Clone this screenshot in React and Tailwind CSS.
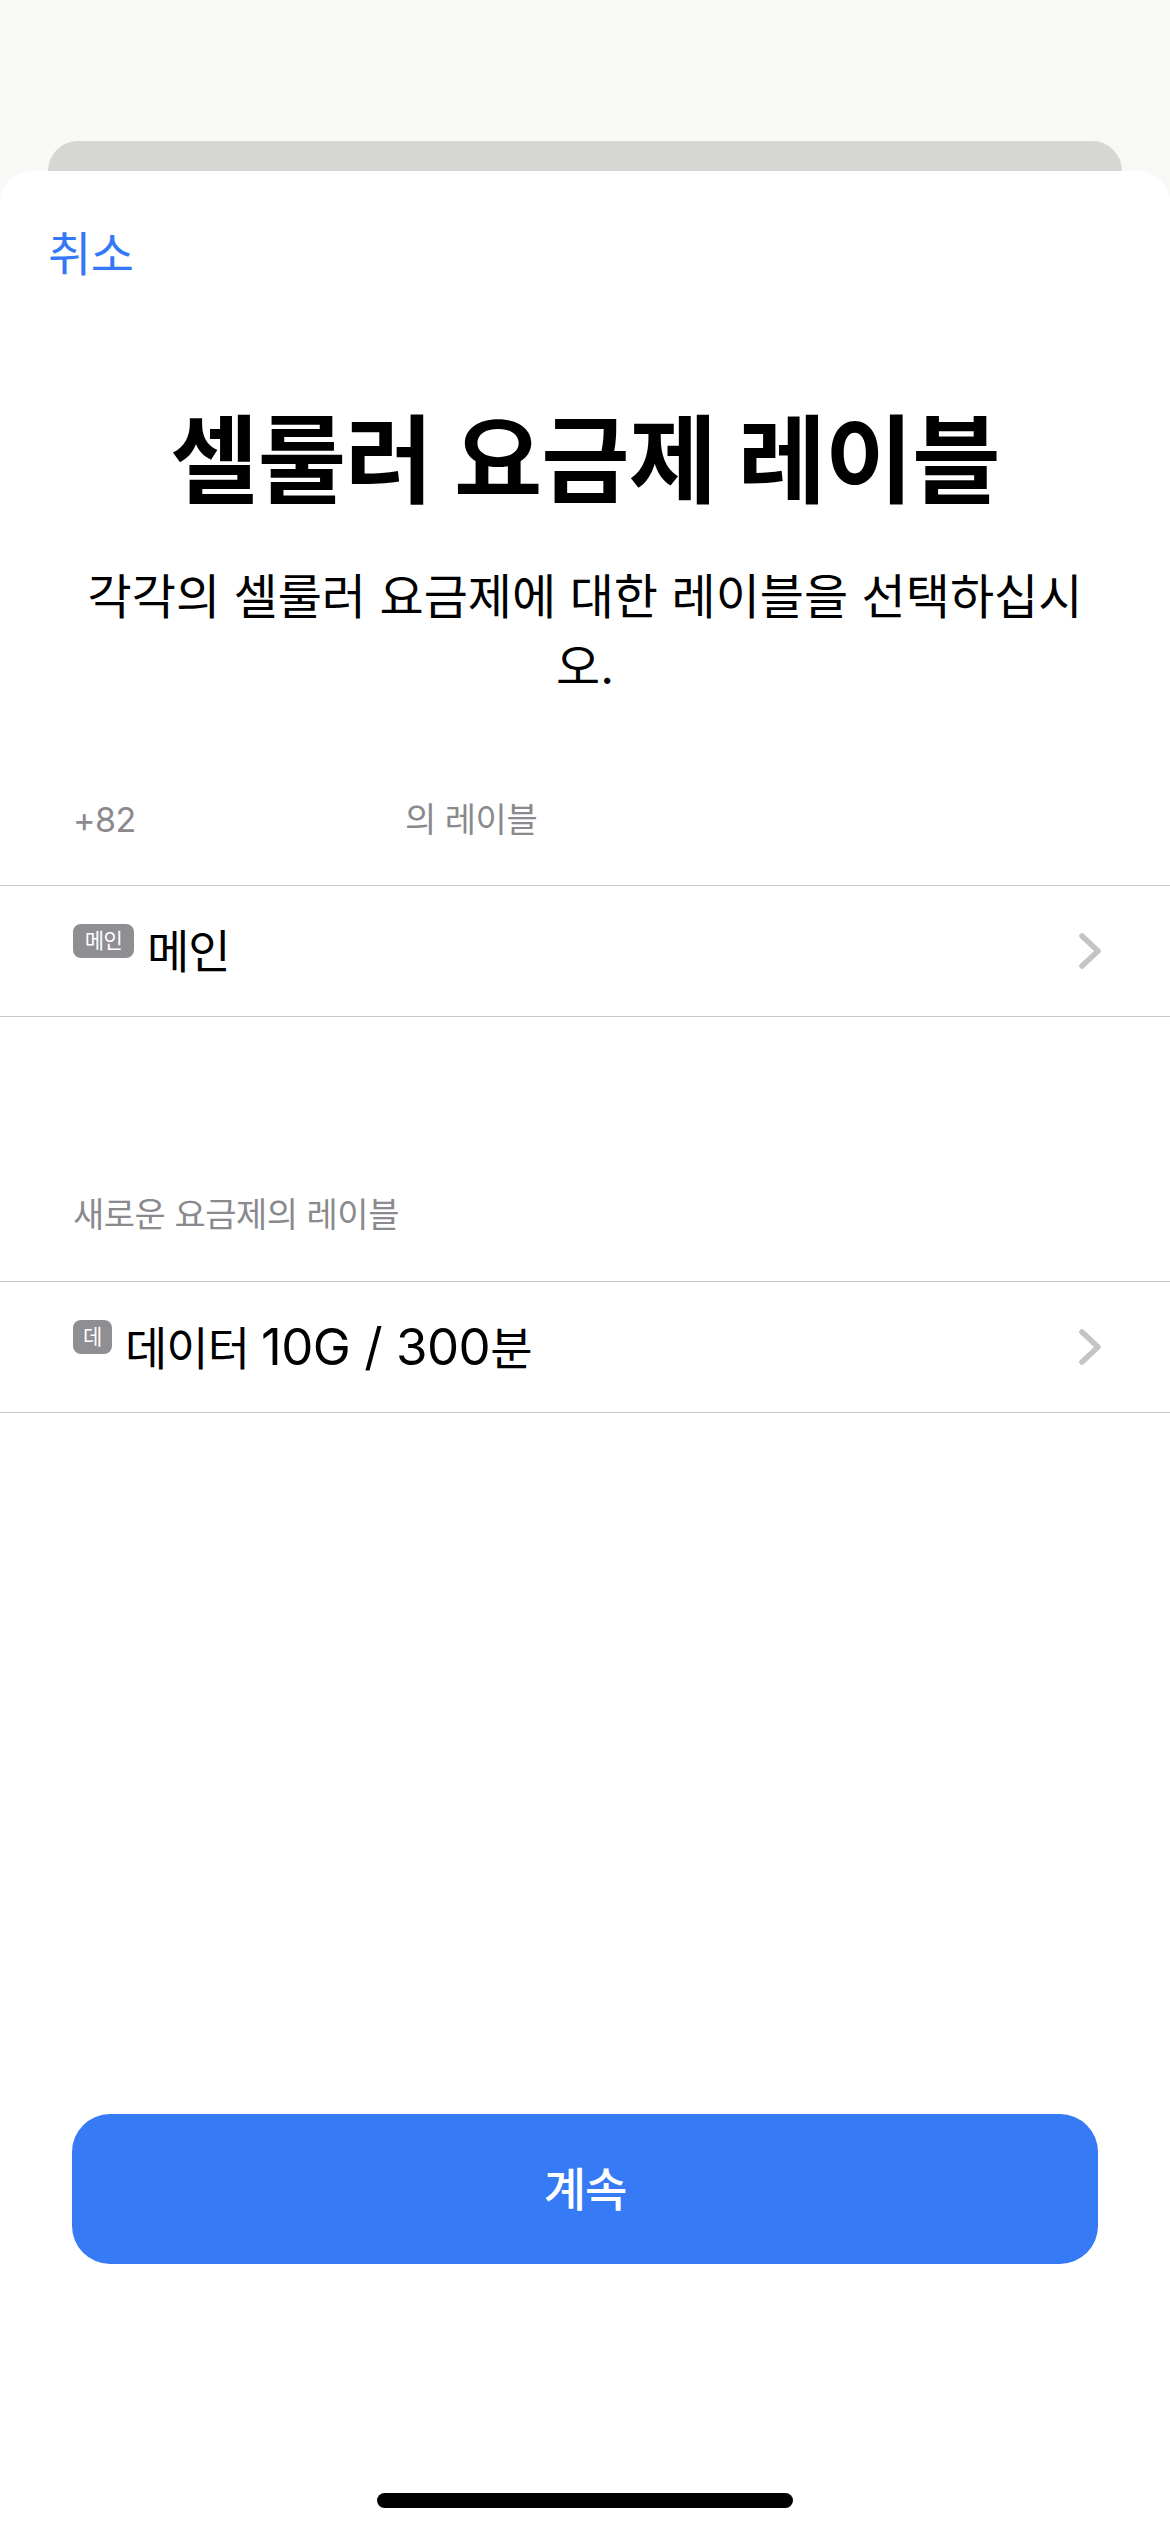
import React from "react";

const FONT = { fontFamily: 'Inter, "Noto Sans CJK KR", sans-serif' };

const Chevron = () => (
  <svg width="24" height="38" viewBox="0 0 24 38" fill="none" className="shrink-0">
    <path d="M4 4 L20 19 L4 34" stroke="#c4c4c7" strokeWidth="5.5" strokeLinecap="round" strokeLinejoin="round" />
  </svg>
);

const PlanRow = ({ badge, children, badgeWidth }) => (
  <div className="flex h-[132px] items-center border-y border-[#c8c8ca] pl-[73px] pr-[68px]">
    <span
      className={`mb-[21px] flex h-[34px] ${badgeWidth} shrink-0 items-center justify-center rounded-[8px] bg-[#8e8e93] text-[21px] leading-none tracking-[-0.5px] text-white`}
    >
      {badge}
    </span>
    <span className="ml-[13px] flex-1 text-[46px] leading-[60px] tracking-[-1px] text-black">{children}</span>
    <Chevron />
  </div>
);

const SectionHeader = ({ children }) => (
  <div className="flex h-[50px] items-center pl-[73px] text-[34px] leading-[50px] tracking-[-0.5px] text-[#8a8a8e]">
    {children}
  </div>
);

export default function App() {
  return (
    <div style={FONT} className="flex h-[2532px] w-full flex-col overflow-hidden bg-gradient-to-b from-[#f9f9f8] to-[#eef0ed]">
      <div className="h-[141px] shrink-0" />
      <div className="mx-[48px] h-[30px] shrink-0 rounded-t-[30px] bg-[#d6d6d3]" />

      <div className="flex flex-1 flex-col rounded-t-[32px] bg-white pt-[53px]">
        <div className="pl-[48px]">
          <button className="text-[47px] leading-[60px] tracking-[-0.5px] text-[#3478f6]">취소</button>
        </div>

        <h1 className="mt-[121px] text-center text-[96px] font-bold leading-[110px] tracking-[-1px] text-black">
          셀룰러 요금제 레이블
        </h1>

        <p className="mt-[47px] px-[60px] text-center text-[48px] leading-[70px] text-black">
          각각의 셀룰러 요금제에 대한 레이블을 선택하십시
          <br />
          오.
        </p>

        <div className="mt-[93px] pb-[40px]">
          <SectionHeader>
            <span className="w-[332px]">+82</span>
            <span>의 레이블</span>
          </SectionHeader>
        </div>
        <PlanRow badge="메인" badgeWidth="w-[61px]">
          메인
        </PlanRow>

        <div className="mt-[173px] pb-[41px]">
          <SectionHeader>새로운 요금제의 레이블</SectionHeader>
        </div>
        <PlanRow badge="데" badgeWidth="w-[39px]">
          데이터 <span className="text-[51px] tracking-[-0.5px]">10G / 300</span>분
        </PlanRow>

        <div className="flex-1" />

        <div className="px-[72px]">
          <button className="flex h-[150px] w-full items-center justify-center rounded-[38px] bg-[#367af6] text-[46px] font-medium tracking-[-1px] text-white">
            계속
          </button>
        </div>

        <div className="mb-[24px] mt-[229px] flex justify-center">
          <div className="h-[15px] w-[416px] rounded-full bg-black" />
        </div>
      </div>
    </div>
  );
}
